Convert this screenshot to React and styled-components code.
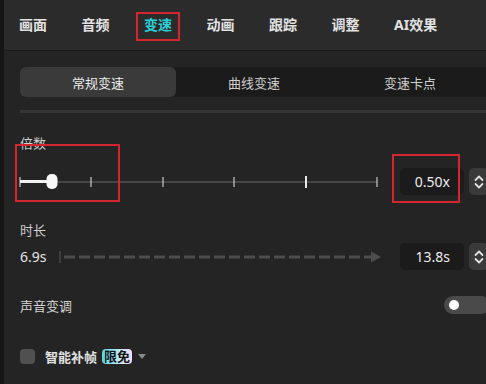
import React from 'react';
import styled, { createGlobalStyle } from 'styled-components';

const GlobalStyle = createGlobalStyle`
  html, body {
    margin: 0;
    padding: 0;
    background: #242424;
    overflow: hidden;
  }
  body {
    font-family: 'Noto Sans', 'Noto Sans CJK SC', sans-serif;
    color: #d8d8d8;
  }
`;

const Screen = styled.div`
  display: flex;
  width: 486px;
  height: 384px;
  overflow: hidden;
`;

const Edge = styled.div`
  flex: 0 0 4px;
  background: #161616;
`;

const Panel = styled.div`
  flex: 0 0 486px;
  display: flex;
  flex-direction: column;
  background: #242424;
`;

const TabBar = styled.nav`
  height: 50px;
  display: flex;
  align-items: center;
  gap: 34.5px;
  padding-left: 15px;
  background: #2b2b2b;
  border-bottom: 1px solid #1b1b1b;
`;

const Tab = styled.div`
  position: relative;
  font-family: 'Noto Sans', 'Noto Sans CJK SC', sans-serif;
  font-size: 14px;
  font-weight: 700;
  line-height: 20px;
  color: ${p => (p.$active ? '#2ccfd6' : '#e2e2e2')};
`;

const Mark = styled.span`
  position: absolute;
  left: ${p => p.$l}px;
  top: ${p => p.$t}px;
  width: ${p => p.$w}px;
  height: ${p => p.$h}px;
  border: 2.5px solid #d5262f;
  box-sizing: border-box;
  pointer-events: none;
`;

const Content = styled.div`
  display: flex;
  flex-direction: column;
  padding: 0 0 0 16px;
  width: 470px;
`;

const Segmented = styled.div`
  margin-top: 16px;
  display: grid;
  grid-template-columns: repeat(3, 156px);
  height: 30px;
  background: #1b1b1b;
  border-radius: 6px;
`;

const Segment = styled.div`
  display: flex;
  align-items: center;
  justify-content: center;
  border-radius: 6px;
  font-size: 13px;
  color: ${p => (p.$active ? '#ececec' : '#cfcfcf')};
  background: ${p => (p.$active ? '#3a3a3a' : 'transparent')};
`;

const Divider = styled.div`
  margin-top: 13px;
  height: 3px;
  background: #363636;
`;

const Label = styled.div`
  font-size: 13px;
  line-height: 18px;
  color: #cfcfcf;
  margin-top: ${p => p.$mt}px;
`;

const Row = styled.div`
  position: relative;
  display: flex;
  align-items: center;
  margin-top: ${p => p.$mt}px;
  height: 27px;
`;

const Slider = styled.div`
  position: relative;
  width: 357px;
  height: 16px;
  margin-right: 23px;
`;

const Track = styled.div`
  position: absolute;
  left: 0;
  right: 0;
  top: 7px;
  height: 2px;
  background: #464646;
`;

const Fill = styled.div`
  position: absolute;
  left: 0;
  top: 6.5px;
  height: 3px;
  background: #f2f2f2;
`;

const Tick = styled.div`
  position: absolute;
  top: ${p => (p.$big ? 2 : 3)}px;
  width: ${p => (p.$big ? 2 : 1)}px;
  height: ${p => (p.$big ? 12 : 10)}px;
  background: #e8e8e8;
  transform: translateX(-50%);
`;

const Thumb = styled.div`
  position: absolute;
  top: 0;
  width: 11px;
  height: 15px;
  border-radius: 5px;
  background: #f7f7f7;
  transform: translateX(-50%);
`;

const ValueBox = styled.div`
  width: 64px;
  height: 27px;
  box-sizing: border-box;
  padding-right: 14px;
  display: flex;
  align-items: center;
  justify-content: flex-end;
  background: #1b1b1b;
  border-radius: 5px;
  font-size: 14px;
  color: #ececec;
  margin-left: ${p => p.$ml || 0}px;
`;

const Stepper = styled.div`
  margin-left: 5px;
  width: 20px;
  height: 27px;
  background: #3a3a3a;
  border-radius: 5px;
  display: flex;
  align-items: center;
  padding-left: 5px;
  box-sizing: border-box;
`;

const Seconds = styled.div`
  width: 39px;
  font-size: 14px;
  color: #e6e6e6;
`;

const Line = styled.svg`
  display: block;
`;

const SwitchRow = styled.div`
  display: flex;
  align-items: center;
  justify-content: space-between;
  margin-top: 26px;
  height: 18px;
  font-size: 13px;
  color: #d4d4d4;
`;

const Switch = styled.div`
  width: 46px;
  height: 18px;
  border-radius: 9px;
  background: #4a4a4a;
  display: flex;
  align-items: center;
  padding-left: 5px;
  box-sizing: border-box;
`;

const Knob = styled.div`
  width: 10px;
  height: 10px;
  border-radius: 50%;
  background: #ffffff;
`;

const CheckRow = styled.div`
  display: flex;
  align-items: center;
  margin-top: 34px;
  height: 16px;
`;

const Box = styled.div`
  width: 15px;
  height: 15px;
  border-radius: 4px;
  background: #505050;
  margin-right: 10px;
`;

const CheckText = styled.span`
  font-size: 13px;
  font-weight: 700;
  color: #e0e0e0;
`;

const Badge = styled.span`
  margin-left: 5px;
  height: 15px;
  padding: 0 2px;
  border-radius: 4px;
  background: linear-gradient(90deg, #56d6e8 0%, #b4e8f2 50%, #f6dcf4 100%);
  color: #141414;
  font-size: 13px;
  font-weight: 700;
  line-height: 15px;
`;

const Caret = styled.span`
  margin-left: 6px;
  width: 0;
  height: 0;
  border-left: 4.5px solid transparent;
  border-right: 4.5px solid transparent;
  border-top: 5px solid #8a8a8a;
`;

const tabs = ['画面', '音频', '变速', '动画', '跟踪', '调整', 'AI效果'];
const modes = ['常规变速', '曲线变速', '变速卡点'];
const ticks = [0, 0.2, 0.4, 0.6, 0.8, 1];

function Chevrons() {
  return (
    <svg width="10" height="16" viewBox="0 0 10 16" fill="none" stroke="#e0e0e0" strokeWidth="1.8" strokeLinecap="round" strokeLinejoin="round">
      <path d="M1.5 6 L5 2.5 L8.5 6" />
      <path d="M1.5 10 L5 13.5 L8.5 10" />
    </svg>
  );
}

function SpeedSlider({ value }) {
  const pct = value * 100;
  return (
    <Slider>
      <Track />
      <Fill style={{ width: `${pct}%` }} />
      {ticks.map((t, i) => (
        <Tick key={i} $big={t === 0.8} style={{ left: `${t * 100}%` }} />
      ))}
      <Thumb style={{ left: `${pct}%` }} />
    </Slider>
  );
}

function DurationLine() {
  return (
    <Line width="322" height="14" viewBox="0 0 322 14">
      <rect x="0" y="1" width="2" height="12" fill="#3e3e3e" />
      <line x1="5" y1="7" x2="313" y2="7" stroke="#4d4d4d" strokeWidth="3" strokeDasharray="11 4" />
      <path d="M312 1.5 L322 7 L312 12.5 Z" fill="#4d4d4d" />
    </Line>
  );
}

export default function App() {
  return (
    <>
      <GlobalStyle />
      <Screen>
        <Edge />
        <Panel>
          <TabBar>
            {tabs.map(t => (
              <Tab key={t} $active={t === '变速'}>
                {t}
                {t === '变速' && <Mark $l={-8} $t={-3} $w={44} $h={29} />}
              </Tab>
            ))}
          </TabBar>
          <Content>
            <Segmented>
              {modes.map((m, i) => (
                <Segment key={m} $active={i === 0}>{m}</Segment>
              ))}
            </Segmented>
            <Divider />
            <Label $mt={21}>倍数</Label>
            <Row $mt={16}>
              <SpeedSlider value={0.0885} />
              <ValueBox>0.50x</ValueBox>
              <Stepper><Chevrons /></Stepper>
              <Mark $l={-5} $t={-24} $w={105} $h={58} />
              <Mark $l={372} $t={-14} $w={68} $h={49} />
            </Row>
            <Label $mt={26}>时长</Label>
            <Row $mt={4}>
              <Seconds>6.9s</Seconds>
              <DurationLine />
              <ValueBox $ml={19}>13.8s</ValueBox>
              <Stepper><Chevrons /></Stepper>
            </Row>
            <SwitchRow>
              <span>声音变调</span>
              <Switch><Knob /></Switch>
            </SwitchRow>
            <CheckRow>
              <Box />
              <CheckText>智能补帧</CheckText>
              <Badge>限免</Badge>
              <Caret />
            </CheckRow>
          </Content>
        </Panel>
      </Screen>
    </>
  );
}
